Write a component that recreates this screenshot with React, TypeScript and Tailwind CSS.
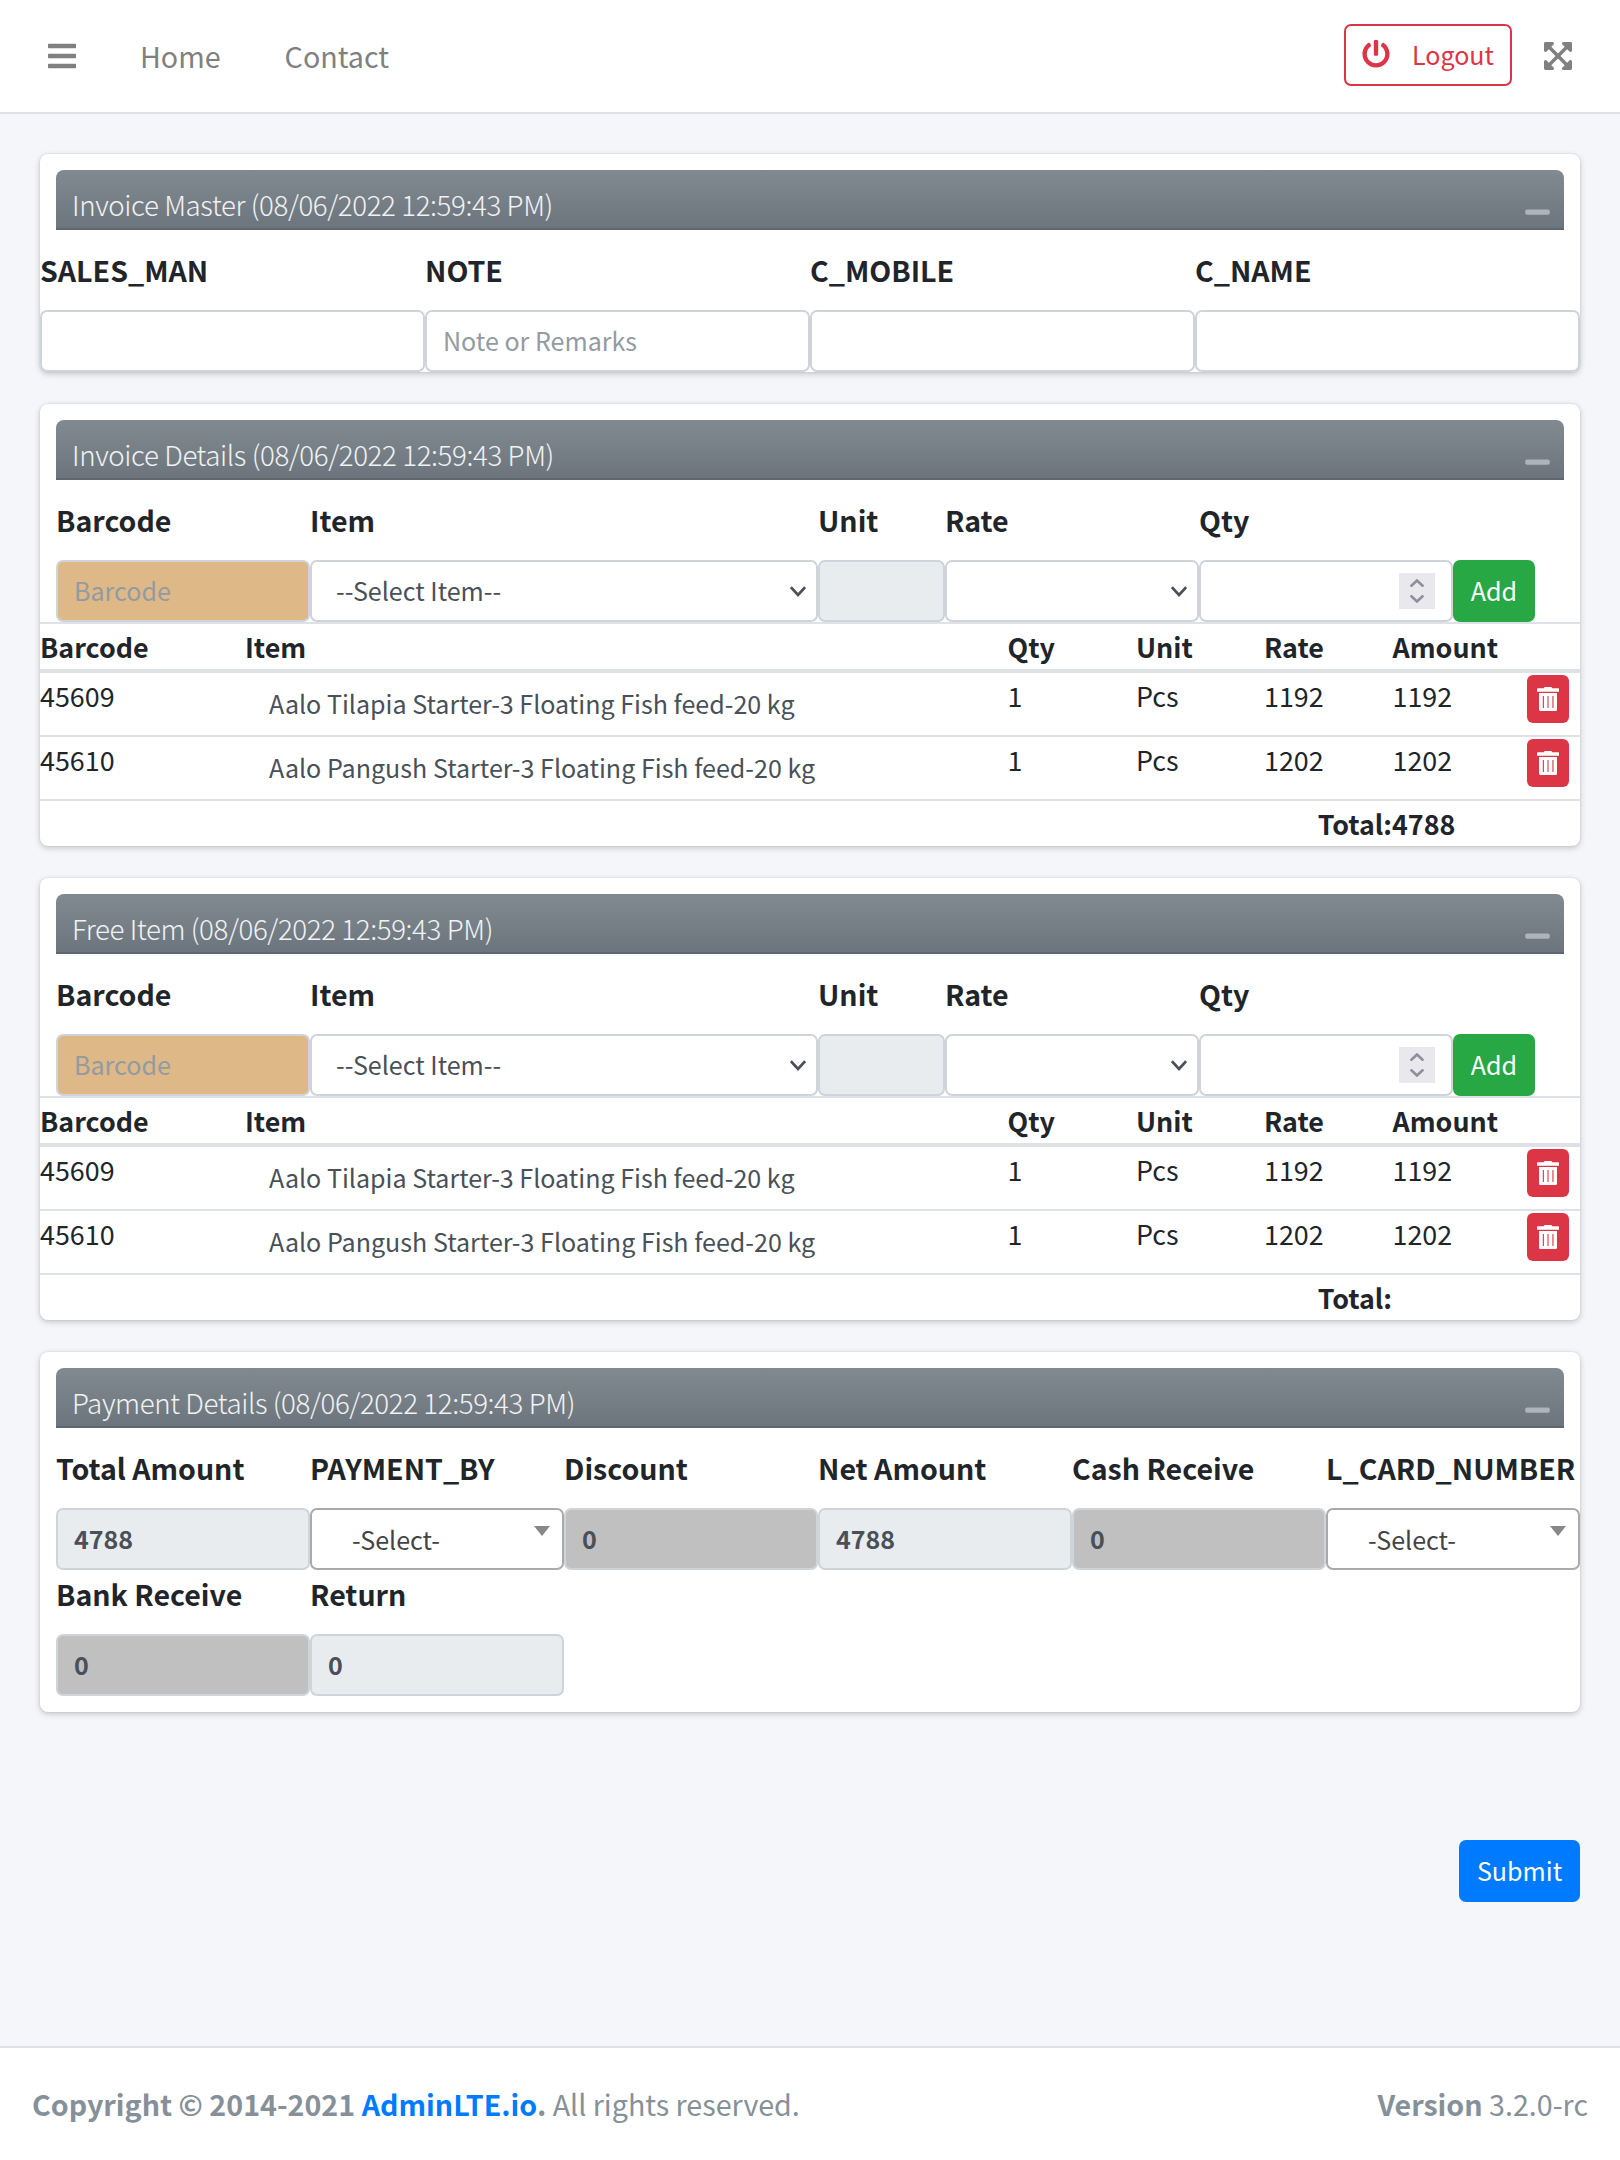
import type { ReactNode } from "react";
import { FaBars, FaExpandArrowsAlt, FaMinus, FaPowerOff } from "react-icons/fa";

const STAMP = "(08/06/2022 12:59:43 PM)";

const ITEMS = [
  { barcode: "45609", name: "Aalo Tilapia Starter-3 Floating Fish feed-20 kg", qty: "1", unit: "Pcs", rate: "1192", amount: "1192" },
  { barcode: "45610", name: "Aalo Pangush Starter-3 Floating Fish feed-20 kg", qty: "1", unit: "Pcs", rate: "1202", amount: "1202" },
];

const CONTROL = "block h-[62px] w-full rounded-[7px] border-2 px-4 pb-[2px] text-[25.07px] leading-[42px] outline-none";

function Card({ title, children }: { title: string; children: ReactNode }) {
  return (
    <section className="rounded-lg bg-white pt-4 shadow-[0_0_2px_rgba(0,0,0,0.125),0_2px_6px_rgba(0,0,0,0.2)]">
      <header className="mx-4 flex h-[60px] items-center justify-between rounded-t-lg border-b-2 border-[#5f666d] bg-linear-to-b from-[#828a91] to-[#6c757d] pr-[14px] pl-4">
        <h3 className="pt-[9px] text-[27.7px] leading-9 font-light tracking-[-0.385px] text-white/90">
          {title} {STAMP}
        </h3>
        <button className="mt-[25px]" aria-label="Collapse">
          <FaMinus className="h-7 w-[25px] text-[#adb4bb]" />
        </button>
      </header>
      {children}
    </section>
  );
}

function Label({ children }: { children: ReactNode }) {
  return <label className="mb-4 block text-[28.55px] leading-[48px] font-bold whitespace-nowrap">{children}</label>;
}

function Field({ label, span, children }: { label: string; span: string; children: ReactNode }) {
  return (
    <div className={span}>
      <Label>{label}</Label>
      {children}
    </div>
  );
}

function Chevron() {
  return (
    <svg className="mt-[2px] h-[11px] w-4" viewBox="0 0 16 11" fill="none" stroke="#495057" strokeWidth="2.6">
      <path d="M0.9 1.2 8 9l7.1-7.8" />
    </svg>
  );
}

function Select({ text }: { text?: string }) {
  return (
    <div className={`${CONTROL} flex items-center justify-between border-[#ced4da] bg-white pr-[10px] pl-6 text-[#495057]`}>
      <span>{text}</span>
      <Chevron />
    </div>
  );
}

function NumberInput() {
  return (
    <div className={`${CONTROL} flex items-center justify-end border-[#ced4da] bg-white`}>
      <div className="mt-[2px] flex size-9 flex-col items-center justify-center gap-2 bg-[#e9e9ed]">
        <svg className="h-2 w-[14px]" viewBox="0 0 14 8" fill="none" stroke="#8f8f9d" strokeWidth="2.6" strokeLinecap="round">
          <path d="M1.4 6.7 7 1.5l5.6 5.2" />
        </svg>
        <svg className="h-2 w-[14px]" viewBox="0 0 14 8" fill="none" stroke="#8f8f9d" strokeWidth="2.6" strokeLinecap="round">
          <path d="M1.4 1.3 7 6.5l5.6-5.2" />
        </svg>
      </div>
    </div>
  );
}

function Select2() {
  return (
    <div className={`${CONTROL} flex justify-between border-[#aaa] bg-white pr-3 pl-10 text-[#444]`}>
      <span className="mt-2">-Select-</span>
      <svg className="mt-4 h-[10px] w-4" viewBox="0 0 16 10" fill="#888">
        <path d="M0 0h16L8 10z" />
      </svg>
    </div>
  );
}

function TrashIcon() {
  return (
    <svg className="h-6 w-[22px]" viewBox="0 0 22 24" fill="currentColor">
      <path d="M7.6 0h6.8l.8 1.2h6.2q.6 0 .6.6v2.4q0 .5-.6.5H.6q-.6 0-.6-.5V1.8q0-.6.6-.6h6.2z" />
      <path d="M2 6h18v16.5q0 1.5-1.5 1.5h-15Q2 24 2 22.5z" />
      <path d="M5.8 9h1.1v12H5.8zM15.4 9h1.1v12h-1.1z" fill="#dc3545" />
      <path d="M10 9h2v12h-2z" fill="#dc3545" fillOpacity="0.55" />
    </svg>
  );
}

function ItemEntry() {
  return (
    <div className="ml-4 grid grid-cols-12 pt-4">
      <Field label="Barcode" span="col-span-2">
        <input className={`${CONTROL} border-[#ced4da] bg-[#deb887] placeholder:text-[#939ba2]`} placeholder="Barcode" />
      </Field>
      <Field label="Item" span="col-span-4">
        <Select text="--Select Item--" />
      </Field>
      <Field label="Unit" span="col-span-1">
        <input className={`${CONTROL} border-[#ced4da] bg-[#e9ecef]`} readOnly />
      </Field>
      <Field label="Rate" span="col-span-2">
        <Select />
      </Field>
      <Field label="Qty" span="col-span-2">
        <NumberInput />
      </Field>
      <div className="flex items-end">
        <button className="h-[62px] w-[82px] rounded-[7px] bg-[#28a745] text-[25.07px] text-white">Add</button>
      </div>
    </div>
  );
}

const COLS = "grid grid-cols-[205px_762.5px_128.5px_128px_128.5px_134.5px_1fr]";

function ItemTable({ total }: { total?: string }) {
  return (
    <div className="text-[26.86px] leading-[45px]">
      <div className={`${COLS} h-[51px] border-t-2 border-b-4 border-[#dee2e6] font-bold`}>
        <span>Barcode</span>
        <span>Item</span>
        <span>Qty</span>
        <span>Unit</span>
        <span>Rate</span>
        <span>Amount</span>
        <span />
      </div>
      {ITEMS.map((item) => (
        <div key={item.barcode} className={`${COLS} h-16 border-b-2 border-[#dee2e6]`}>
          <span>{item.barcode}</span>
          <span className="pt-2 pl-6 text-[25.07px] text-[#495057]">{item.name}</span>
          <span>{item.qty}</span>
          <span>{item.unit}</span>
          <span>{item.rate}</span>
          <span>{item.amount}</span>
          <button className="mt-[2px] flex h-12 w-[42px] items-center justify-center rounded-[6px] bg-[#dc3545] text-white" aria-label="Delete">
            <TrashIcon />
          </button>
        </div>
      ))}
      <div className="flex h-[45px] font-bold">
        <span className="w-[1352px] text-right">Total:</span>
        <span>{total}</span>
      </div>
    </div>
  );
}

function Value({ value, dark }: { value: string; dark?: boolean }) {
  return (
    <input
      className={`${CONTROL} border-[#ced4da] font-bold text-[#495057] ${dark ? "bg-[#c0c0c0]" : "bg-[#e9ecef]"}`}
      defaultValue={value}
      readOnly
    />
  );
}

export default function App() {
  return (
    <div className="flex h-[2160px] w-[1620px] flex-col bg-[#f4f6f9] font-['Noto_Sans_CJK_SC','Noto_Sans',sans-serif] text-[28.65px] text-[#212529]">
      <nav className="flex h-[114px] shrink-0 items-center border-b-2 border-[#dee2e6] bg-white pr-12 pl-12 text-[#808080]">
        <FaBars className="h-8 w-7" />
        <a className="ml-16 leading-[48px]">Home</a>
        <a className="ml-16 leading-[48px]">Contact</a>
        <button className="-mt-[2px] ml-auto flex h-[62px] w-[168px] items-center justify-between rounded-[7px] border-2 border-[#dc3545] px-4 text-[25.07px] text-[#dc3545]">
          <FaPowerOff className="size-7 -translate-y-px" />
          <span>Logout</span>
        </button>
        <FaExpandArrowsAlt className="ml-8 h-8 w-7" />
      </nav>

      <main className="flex grow flex-col gap-8 px-10 pt-10">
        <Card title="Invoice Master">
          <div className="grid grid-cols-4 pt-4">
            <Field label="SALES_MAN" span="">
              <input className={`${CONTROL} border-[#ced4da]`} />
            </Field>
            <Field label="NOTE" span="">
              <input className={`${CONTROL} border-[#ced4da] placeholder:text-[#939ba2]`} placeholder="Note or Remarks" />
            </Field>
            <Field label="C_MOBILE" span="">
              <input className={`${CONTROL} border-[#ced4da]`} />
            </Field>
            <Field label="C_NAME" span="">
              <input className={`${CONTROL} border-[#ced4da]`} />
            </Field>
          </div>
        </Card>

        <Card title="Invoice Details">
          <ItemEntry />
          <ItemTable total="4788" />
        </Card>

        <Card title="Free Item">
          <ItemEntry />
          <ItemTable />
        </Card>

        <Card title="Payment Details">
          <div className="ml-4 grid grid-cols-6 pt-4 pb-4">
            <Field label="Total Amount" span="">
              <Value value="4788" />
            </Field>
            <Field label="PAYMENT_BY" span="">
              <Select2 />
            </Field>
            <Field label="Discount" span="">
              <Value value="0" dark />
            </Field>
            <Field label="Net Amount" span="">
              <Value value="4788" />
            </Field>
            <Field label="Cash Receive" span="">
              <Value value="0" dark />
            </Field>
            <Field label="L_CARD_NUMBER" span="">
              <Select2 />
            </Field>
            <Field label="Bank Receive" span="">
              <Value value="0" dark />
            </Field>
            <Field label="Return" span="">
              <Value value="0" />
            </Field>
          </div>
        </Card>

        <button className="mt-24 h-[62px] w-[121px] self-end rounded-[7px] bg-[#007bff] text-[25.07px] text-white">Submit</button>
      </main>

      <footer className="flex h-[114px] shrink-0 items-center justify-between border-t-2 border-[#dee2e6] bg-white px-8 leading-[48px] text-[#869099]">
        <p>
          <strong>
            Copyright © 2014-2021 <a className="text-[#007bff]">AdminLTE.io</a>.
          </strong>{" "}
          All rights reserved.
        </p>
        <p>
          <b>Version</b> 3.2.0-rc
        </p>
      </footer>
    </div>
  );
}
